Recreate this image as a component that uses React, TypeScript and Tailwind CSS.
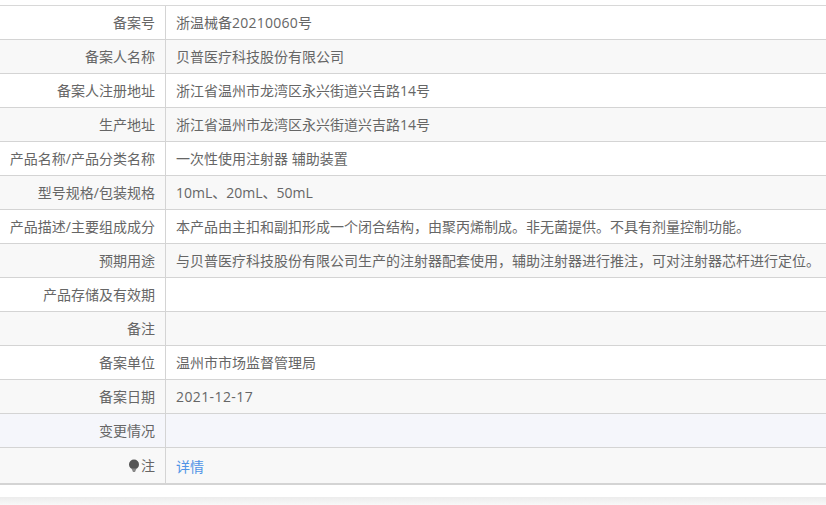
import type { ReactNode } from "react";

const rows: { l: string; v: ReactNode; bg: string }[] = [
  { l: "备案号", v: <>浙温械备<span className="tracking-[0.25px]">20210060</span>号</>, bg: "bg-white" },
  { l: "备案人名称", v: "贝普医疗科技股份有限公司", bg: "bg-[#f8f8f8]" },
  { l: "备案人注册地址", v: "浙江省温州市龙湾区永兴街道兴吉路14号", bg: "bg-white" },
  { l: "生产地址", v: "浙江省温州市龙湾区永兴街道兴吉路14号", bg: "bg-[#f8f8f8]" },
  { l: "产品名称/产品分类名称", v: "一次性使用注射器 辅助装置", bg: "bg-white" },
  { l: "型号规格/包装规格", v: "10mL、20mL、50mL", bg: "bg-[#f8f8f8]" },
  { l: "产品描述/主要组成成分", v: "本产品由主扣和副扣形成一个闭合结构，由聚丙烯制成。非无菌提供。不具有剂量控制功能。", bg: "bg-white" },
  { l: "预期用途", v: "与贝普医疗科技股份有限公司生产的注射器配套使用，辅助注射器进行推注，可对注射器芯杆进行定位。", bg: "bg-[#f8f8f8]" },
  { l: "产品存储及有效期", v: "", bg: "bg-white" },
  { l: "备注", v: "", bg: "bg-[#f8f8f8]" },
  { l: "备案单位", v: "温州市市场监督管理局", bg: "bg-white" },
  { l: "备案日期", v: <span className="tracking-[0.4px]">2021-12-17</span>, bg: "bg-[#f8f8f8]" },
  { l: "变更情况", v: "", bg: "bg-[#f5f6fb]" },
];

export default function App() {
  return (
    <div className="h-[505px] w-[826px] overflow-hidden bg-white text-[14px] leading-[20px] text-[#666] font-['Open_Sans','Noto_Sans_CJK_SC',sans-serif]">
      <div className="h-[5px]" />
      <div className="border-t border-[#d8d8d8]">
        {rows.map((r) => (
          <div key={r.l} className={`flex h-[34px] border-b border-[#d4d4d4] ${r.bg}`}>
            <div className="flex w-[165px] items-center justify-end pr-[10px] pt-[1px] whitespace-nowrap">{r.l}</div>
            <div className="flex flex-1 items-center whitespace-nowrap border-l border-[#d4d4d4] pl-[10px] pt-[1px]">{r.v}</div>
          </div>
        ))}
        <div className="flex h-[37px] border-b-2 border-[#d4d4d4] bg-[#f8f8f8]">
          <div className="flex w-[165px] items-center justify-end pr-[10px]">
            <svg width="14" height="15" viewBox="0 0 14 15" className="mt-[1px]">
              <circle cx="7" cy="5.5" r="5" fill="#555" />
              <path d="M4.5 9.5h5L8 13H6z" fill="#888" />
            </svg>
            <span>注</span>
          </div>
          <div className="flex flex-1 items-center border-l border-[#d4d4d4] pl-[10px] pt-[3px] text-[#4f94e6]">详情</div>
        </div>
      </div>
      <div className="mt-[12px] h-[8px] bg-gradient-to-b from-[#ececec] to-[#f8f8f8]" />
    </div>
  );
}
